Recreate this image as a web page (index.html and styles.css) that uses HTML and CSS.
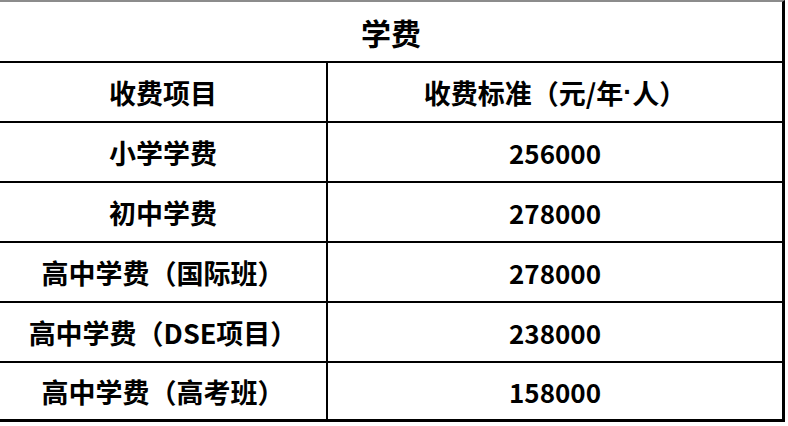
FILE: index.html
```html
<!DOCTYPE html>
<html lang="zh-CN">
<head>
<meta charset="utf-8">
<title>学费</title>
<link rel="stylesheet" href="styles.css">
</head>
<body>
<div class="fee-table">
  <div class="title">学费</div>
  <div class="row">
    <div class="cell item">收费项目</div>
    <div class="cell price">收费标准（元/年<span class="dot">·</span>人）</div>
  </div>
  <div class="row">
    <div class="cell item">小学学费</div>
    <div class="cell price num">256000</div>
  </div>
  <div class="row">
    <div class="cell item">初中学费</div>
    <div class="cell price num">278000</div>
  </div>
  <div class="row">
    <div class="cell item">高中学费（国际班）</div>
    <div class="cell price num">278000</div>
  </div>
  <div class="row">
    <div class="cell item">高中学费（DSE项目）</div>
    <div class="cell price num">238000</div>
  </div>
  <div class="row last">
    <div class="cell item">高中学费（高考班）</div>
    <div class="cell price num">158000</div>
  </div>
</div>
</body>
</html>
```
FILE: styles.css
```css
html, body {
  margin: 0;
  padding: 0;
  background: #ffffff;
}
body {
  width: 788px;
  height: 426px;
  overflow: hidden;
  font-family: "Noto Sans CJK SC", "Noto Sans", sans-serif;
  font-weight: 700;
  color: #000;
}
.fee-table {
  width: 782px;
  border-top: 2px solid #8c8c8c;
  border-right: 3px solid #000;
}
.title {
  height: 59px;
  border-bottom: 2px solid #000;
  display: flex;
  align-items: center;
  justify-content: center;
  font-size: 30px;
}
.row {
  display: grid;
  grid-template-columns: 328px 1fr;
  height: 58px;
  border-bottom: 2px solid #000;
}
.row.last {
  height: 56px;
  border-bottom: 3px solid #000;
}
.cell {
  display: flex;
  align-items: center;
  justify-content: center;
  font-size: 27px;
  white-space: nowrap;
}
.cell.num {
  font-size: 26px;
}
.dot {
  font-family: "Liberation Sans", sans-serif;
}
.item {
  border-right: 2px solid #000;
}
```
